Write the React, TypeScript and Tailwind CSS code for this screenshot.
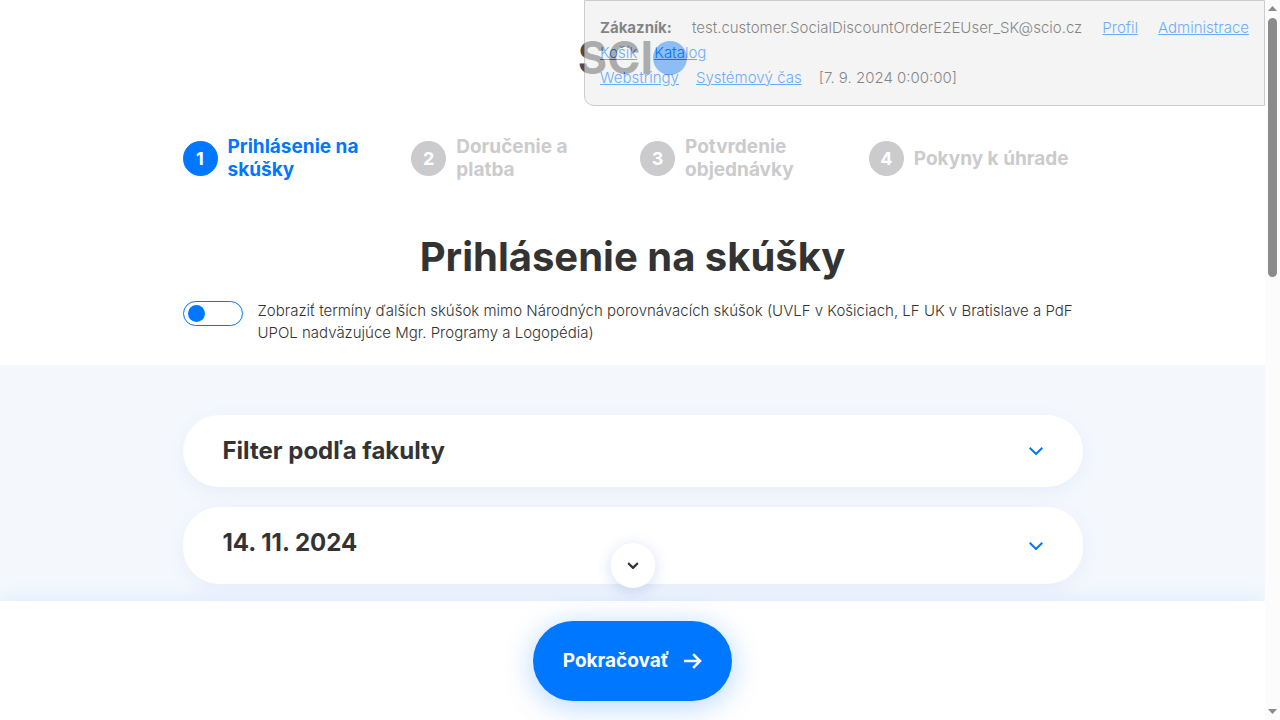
import { useState } from "react";

const steps = ["Prihlásenie na skúšky", "Doručenie a platba", "Potvrdenie objednávky", "Pokyny k úhrade"];

function Chevron({ className }: { className: string }) {
  return (
    <svg viewBox="0 0 14 8" className={className} fill="none" stroke="currentColor" aria-hidden="true">
      <path d="M0.7 0.8 L7 7 L13.3 0.8" />
    </svg>
  );
}

function DebugLink({ children }: { children: string }) {
  return (
    <a href="#" className="text-[#0077ff] underline">
      {children}
    </a>
  );
}

function CustomerPanel() {
  return (
    <aside className="absolute top-0 right-0 w-full max-w-[681px] rounded-bl-[10px] border border-[#aaa] bg-[#ededed] px-[15px] py-[14px] text-[15px] leading-[25px] font-light whitespace-nowrap opacity-60">
      <div className="flex justify-between">
        <strong className="font-bold">Zákazník:</strong>
        <span>test.customer.SocialDiscountOrderE2EUser_SK@scio.cz</span>
        <DebugLink>Profil</DebugLink>
        <DebugLink>Administrace</DebugLink>
      </div>
      <div className="flex gap-[17px]">
        <DebugLink>Košík</DebugLink>
        <DebugLink>Katalog</DebugLink>
      </div>
      <div className="flex gap-[17px] pb-px">
        <DebugLink>Webstringy</DebugLink>
        <DebugLink>Systémový čas</DebugLink>
        <span>[7. 9. 2024 0:00:00]</span>
      </div>
    </aside>
  );
}

function Logo() {
  return (
    <a href="#" aria-label="SCIO" className="flex h-[35px] items-center justify-center">
      <span className="text-[45px] leading-[35px] font-bold text-[#4b4b4d]">SCI</span>
      <span className="size-[34px] rounded-full bg-[#0077ff]" />
    </a>
  );
}

function Steps() {
  return (
    <ol className="grid grid-cols-4 gap-[15px]">
      {steps.map((label, i) => (
        <li
          key={label}
          className={`flex items-center gap-[10px] text-[19px] leading-[23px] font-bold ${i === 0 ? "text-[#0077ff]" : "text-[#cbcbcd]"}`}
        >
          <span
            className={`flex size-[35px] shrink-0 items-center justify-center rounded-full text-[18px] text-white ${i === 0 ? "bg-[#0077ff]" : "bg-[#cbcbcd]"}`}
          >
            {i + 1}
          </span>
          <span className="max-w-[160px]">{label}</span>
        </li>
      ))}
    </ol>
  );
}

function ExamToggle() {
  const [on, setOn] = useState(false);
  return (
    <label className="flex items-start gap-[15px] text-[15px] leading-[22px] font-light">
      <input
        type="checkbox"
        checked={on}
        onChange={(e) => setOn(e.target.checked)}
        className="mt-px h-[25px] w-[60px] shrink-0 appearance-none rounded-full border border-[#0077ff] bg-white px-1 py-[3px] before:block before:size-[17px] before:rounded-full before:bg-[#0077ff] checked:before:ml-auto"
      />
      <span>
        Zobraziť termíny ďalších skúšok mimo Národných porovnávacích skúšok (UVLF v Košiciach, LF UK v Bratislave a PdF
        UPOL nadväzujúce Mgr. Programy a Logopédia)
      </span>
    </label>
  );
}

function Card({ title, titleClass }: { title: string; titleClass: string }) {
  return (
    <button
      type="button"
      className="flex w-full items-center justify-between rounded-[36px] bg-white px-10 py-[18px] text-left shadow-[0_5px_20px_rgba(0,60,200,0.06)]"
    >
      <span className={`text-[24px] leading-9 font-bold ${titleClass}`}>{title}</span>
      <Chevron className="h-2 w-[14px] stroke-2 text-[#0077ff]" />
    </button>
  );
}

function Scrollbar() {
  return (
    <div
      aria-hidden="true"
      className="relative z-10 flex w-[15px] shrink-0 flex-col items-center justify-between bg-[#fcfcfc] py-[6px]"
    >
      <div className="flex flex-col items-center gap-[7px]">
        <svg viewBox="0 0 9 5" className="h-[5px] w-[9px]">
          <path d="M0 5 L4.5 0 L9 5 Z" fill="#8b8b8b" />
        </svg>
        <div className="h-[259px] w-[9px] rounded-full bg-[#8b8b8b]" />
      </div>
      <svg viewBox="0 0 9 5" className="h-[5px] w-[9px]">
        <path d="M0 0 L9 0 L4.5 5 Z" fill="#8b8b8b" />
      </svg>
    </div>
  );
}

export default function App() {
  return (
    <div className="flex h-screen bg-white font-['Inter','Noto_Sans',sans-serif] text-[#333]">
      <div className="relative flex min-w-0 flex-1 flex-col">
        <main className="flex min-h-0 flex-1 flex-col overflow-hidden">
          <header className="pt-10">
            <Logo />
          </header>
          <div className="mx-auto w-full max-w-[900px] pt-[60px] pb-[21px]">
            <Steps />
            <h1 className="mt-[52px] mb-[19px] text-center text-[40px] leading-[48px] font-bold">Prihlásenie na skúšky</h1>
            <ExamToggle />
          </div>
          <section className="flex-1 bg-[#f4f8fd] pt-[50px]">
            <div className="mx-auto flex max-w-[900px] flex-col gap-5">
              <Card title="Filter podľa fakulty" titleClass="" />
              <Card title="14. 11. 2024" titleClass="pb-[5px]" />
            </div>
          </section>
        </main>
        <footer className="relative flex justify-center bg-white pt-5 pb-[19px] shadow-[0_0_20px_rgba(0,119,255,0.12)]">
          <button
            type="button"
            aria-label="Posunúť nadol"
            className="absolute bottom-full left-1/2 mb-[13px] flex size-[45px] -translate-x-1/2 items-center justify-center rounded-full bg-white shadow-[0_3px_15px_rgba(0,70,200,0.18)]"
          >
            <Chevron className="h-[7px] w-[11px] stroke-3" />
          </button>
          <button
            type="button"
            className="flex h-20 items-center gap-[15px] rounded-full bg-[#0077ff] px-[30px] text-[19px] font-bold text-white shadow-[0_5px_30px_rgba(0,119,255,0.3)]"
          >
            Pokračovať
            <svg viewBox="0 0 18 16" className="h-4 w-[18px]" fill="none" stroke="currentColor" strokeWidth="2.6" aria-hidden="true">
              <path d="M0 8 H16 M9.2 1.2 L16 8 L9.2 14.8" />
            </svg>
          </button>
        </footer>
        <CustomerPanel />
      </div>
      <Scrollbar />
    </div>
  );
}
